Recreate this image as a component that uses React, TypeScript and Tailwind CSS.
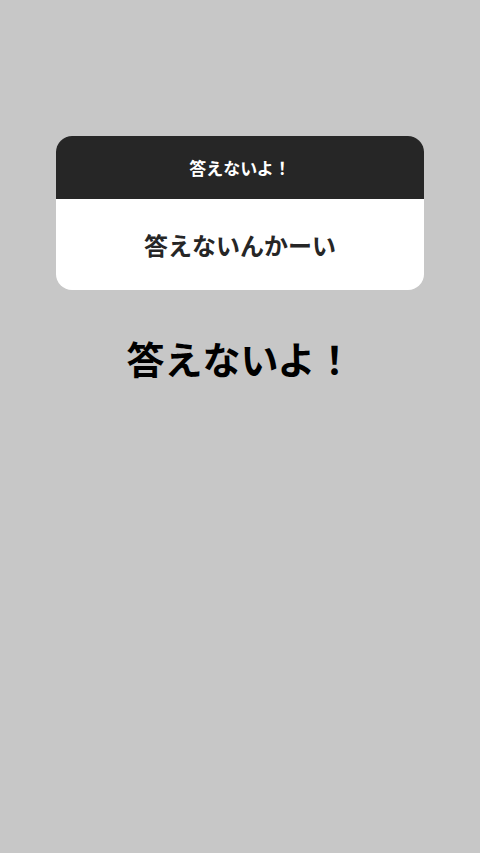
import React from 'react'

const App = () => {
    return (
        <div
            className="w-[480px] h-[853px] bg-[#c7c7c7] flex flex-col items-center pt-[136px]"
            style={{ fontFamily: '"Noto Sans CJK JP", "Noto Sans", sans-serif' }}
        >
            <div className="w-[368px] rounded-[16px] overflow-hidden bg-white">
                <div className="h-[63px] bg-[#262626] flex items-center justify-center">
                    <span className="text-white text-[17px] font-bold">答えないよ！</span>
                </div>
                <div className="h-[91px] flex items-center justify-center">
                    <span className="text-[#262626] text-[24px] font-bold">答えないんかーい</span>
                </div>
            </div>
            <div className="mt-[44px] text-black text-[38px] font-bold leading-[48px]">答えないよ！</div>
        </div>
    )
}

export default App
